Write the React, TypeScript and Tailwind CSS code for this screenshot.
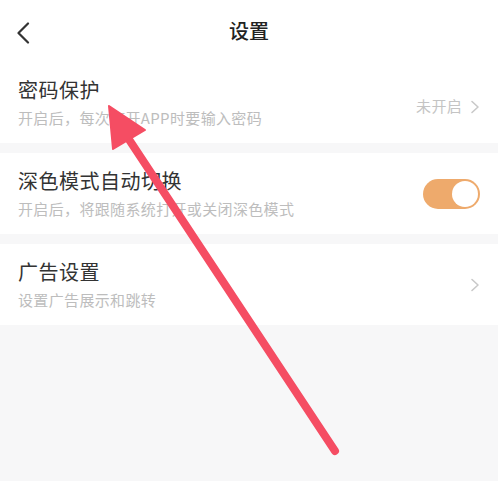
import React from "react";

const font = { fontFamily: '"Noto Sans CJK SC", "Noto Sans", sans-serif' };

function Chevron() {
  return (
    <svg width="10" height="14" viewBox="0 0 10 14" className="shrink-0">
      <polyline points="2,1.5 8,7 2,12.5" fill="none" stroke="#c9c9c9" strokeWidth="1.6" strokeLinecap="round" strokeLinejoin="round" />
    </svg>
  );
}

function Row({ title, sub, right, h = "h-[81px]" }: { title: string; sub: string; right: React.ReactNode; h?: string }) {
  return (
    <div className={`flex items-center justify-between bg-white pl-[18px] pr-[18px] ${h}`}>
      <div className="flex flex-col">
        <div className="text-[20px] leading-[26px] tracking-[0.5px] text-[#333333]">{title}</div>
        <div className="mt-[5px] text-[15px] leading-[20px] tracking-[0.35px] text-[#bdbdbd]">{sub}</div>
      </div>
      {right}
    </div>
  );
}

export default function App() {
  return (
    <div className="relative min-h-screen w-full overflow-hidden bg-[#f7f7f8]" style={font}>
      <div className="relative flex h-[62px] items-center justify-center bg-white">
        <svg width="14" height="22" viewBox="0 0 14 22" className="absolute left-[16px] top-[22px]">
          <polyline points="12,1.5 2.5,11 12,20.5" fill="none" stroke="#333" strokeWidth="2.2" strokeLinecap="round" strokeLinejoin="round" />
        </svg>
        <div className="text-[20px] font-medium text-[#222]">设置</div>
      </div>
      <Row
        title="密码保护"
        sub="开启后，每次打开APP时要输入密码"
        right={
          <div className="mt-[8px] flex items-center gap-[8px]">
            <span className="text-[15px] tracking-[0.3px] text-[#c4c4c4]">未开启</span>
            <Chevron />
          </div>
        }
      />
      <div className="h-[10px]" />
      <Row
        title="深色模式自动切换"
        sub="开启后，将跟随系统打开或关闭深色模式"
        right={
          <div className="flex h-[30px] w-[57px] items-center justify-end rounded-full bg-[#eeaa6c] p-[2px]">
            <div className="h-[26px] w-[26px] rounded-full bg-white" />
          </div>
        }
      />
      <div className="h-[10px]" />
      <Row title="广告设置" sub="设置广告展示和跳转" right={<Chevron />} />

      <svg className="pointer-events-none absolute left-0 top-0" width="498" height="481" viewBox="0 0 498 481">
        <line x1="128" y1="138" x2="335" y2="451" stroke="#f54d63" strokeWidth="8" strokeLinecap="round" />
        <polygon points="109,106 145,130 113,149" fill="#f54d63" stroke="#f54d63" strokeWidth="2" strokeLinejoin="round" />
      </svg>
    </div>
  );
}
